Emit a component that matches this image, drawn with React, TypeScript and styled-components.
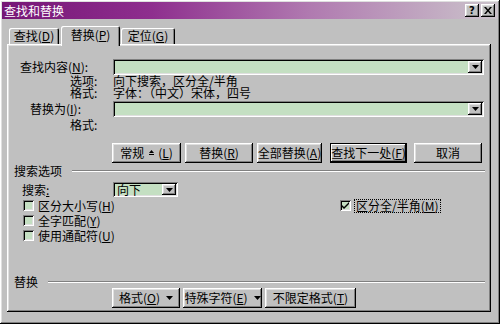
import styled, { createGlobalStyle, css } from 'styled-components';

const GlobalStyle = createGlobalStyle`
  html, body {
    margin: 0;
    padding: 0;
    background: #c0c0c0;
  }
  body {
    font-family: "Noto Sans CJK SC", "DejaVu Sans", sans-serif;
    font-size: 12px;
    color: #000;
  }
`;

const raised = css`
  box-shadow:
    inset -1px -1px #000,
    inset 1px 1px #fff,
    inset -2px -2px #808080,
    inset 2px 2px #dfdfdf;
`;

const sunken = css`
  box-shadow:
    inset 1px 1px #808080,
    inset -1px -1px #fff,
    inset 2px 2px #000,
    inset -2px -2px #dfdfdf;
`;

const GREEN = '#c4dfc2';

const Window = styled.div`
  width: 500px;
  height: 324px;
  box-sizing: border-box;
  padding: 2px;
  background: #c0c0c0;
  display: flex;
  flex-direction: column;
  ${raised}
`;

const TitleBar = styled.div`
  height: 17px;
  display: flex;
  align-items: center;
  padding: 0 3px 0 2px;
  background: linear-gradient(to right, #761676 0%, #8e2e8e 30%, #b07ab0 62%, #cbc3cb 100%);
  color: #fff;
`;

const Title = styled.span`
  flex: 1;
  line-height: 17px;
  font-size: 12px;
`;

const TitleButton = styled.div`
  width: 14px;
  height: 13px;
  margin-left: 2px;
  background: #c0c0c0;
  color: #000;
  display: flex;
  align-items: center;
  justify-content: center;
  font-family: "DejaVu Sans", sans-serif;
  font-weight: bold;
  font-size: 10px;
  line-height: 1;
  ${raised}
`;

const Body = styled.div`
  flex: 1;
  display: flex;
  flex-direction: column;
  padding: 7px 7px 0 5px;
`;

const TabRow = styled.div`
  height: 20px;
  margin-bottom: -2px;
  padding-left: 2px;
  display: flex;
  align-items: flex-start;
  position: relative;
  z-index: 1;
`;

const Tab = styled.div<{ $w: number; $active?: boolean; $ml?: number }>`
  width: ${(p) => p.$w}px;
  height: ${(p) => (p.$active ? 20 : 16)}px;
  margin-top: ${(p) => (p.$active ? 0 : 2)}px;
  margin-left: ${(p) => p.$ml ?? 0}px;
  box-sizing: border-box;
  background: #c0c0c0;
  border-radius: 2px 2px 0 0;
  text-align: center;
  padding-top: ${(p) => (p.$active ? 3 : 2)}px;
  line-height: 12px;
  white-space: nowrap;
  box-shadow:
    inset 1px 1px #fff,
    inset -1px 0 #000,
    inset -2px 0 #808080;
`;

const Key = styled.u`
  text-underline-offset: 1px;
`;

const Panel = styled.div`
  height: 268px;
  box-sizing: border-box;
  display: flex;
  flex-direction: column;
  padding: 15px 6px 4px 0;
  ${raised}
`;

const FieldRow = styled.div<{ $mt?: number }>`
  display: grid;
  grid-template-columns: 106px 371px;
  align-items: center;
  margin-top: ${(p) => p.$mt ?? 0}px;
  line-height: 12px;
`;

const Label = styled.div<{ $indent: number }>`
  padding-left: ${(p) => p.$indent}px;
  white-space: nowrap;
`;

const Combo = styled.div<{ $w?: number; $h?: number }>`
  width: ${(p) => (p.$w ? `${p.$w}px` : 'auto')};
  height: ${(p) => p.$h ?? 16}px;
  box-sizing: border-box;
  background: ${GREEN};
  display: flex;
  align-items: center;
  justify-content: space-between;
  padding: 2px 2px 2px 4px;
  ${sunken}
`;

const ComboText = styled.span`
  line-height: 12px;
`;

const DropButton = styled.div`
  width: 14px;
  height: 100%;
  box-sizing: border-box;
  background: #c0c0c0;
  display: flex;
  align-items: center;
  justify-content: center;
  ${raised}
`;

const Arrow = () => (
  <svg width="7" height="4" viewBox="0 0 7 4">
    <path d="M0 0h7L3.5 4z" fill="#000" />
  </svg>
);

const ButtonRow = styled.div<{ $mt: number }>`
  display: flex;
  padding-left: 105px;
  gap: 3px;
  margin-top: ${(p) => p.$mt}px;
`;

const Button = styled.div<{ $w: number; $ml?: number; $default?: boolean }>`
  width: ${(p) => p.$w}px;
  height: 20px;
  margin-left: ${(p) => p.$ml ?? 0}px;
  box-sizing: border-box;
  display: flex;
  align-items: center;
  justify-content: center;
  line-height: 12px;
  white-space: nowrap;
  background: #c0c0c0;
  ${(p) =>
    p.$default
      ? css`
          box-shadow:
            inset 0 0 0 1px #000,
            inset -2px -2px #000,
            inset 2px 2px #fff,
            inset -3px -3px #808080;
        `
      : raised}
`;

const ButtonIcon = styled.span<{ $side: 'left' | 'right' }>`
  display: inline-flex;
  align-items: center;
  margin: ${(p) => (p.$side === 'left' ? '0 4px 0 5px' : '0 0 0 6px')};
`;

const GroupHeader = styled.div<{ $mt?: string }>`
  display: flex;
  align-items: center;
  gap: 10px;
  padding-left: 7px;
  height: 12px;
  line-height: 12px;
  margin-top: ${(p) => p.$mt ?? '0'};

  &::after {
    content: '';
    flex: 1;
    height: 0;
    border-top: 1px solid #808080;
    border-bottom: 1px solid #fff;
  }
`;

const SearchRow = styled.div`
  display: grid;
  grid-template-columns: 106px 65px;
  align-items: center;
  margin-top: 5px;
  line-height: 12px;
`;

const OptionGrid = styled.div`
  display: grid;
  grid-template-columns: 317px auto;
  grid-auto-rows: 15px;
  padding-left: 16px;
  margin-top: 1px;
`;

const Check = styled.div`
  display: flex;
  align-items: center;
  gap: 4px;
  line-height: 12px;
`;

const Box = styled.div`
  width: 11px;
  height: 11px;
  box-sizing: border-box;
  background: ${GREEN};
  display: flex;
  align-items: center;
  justify-content: center;
  ${sunken}
`;

const Focus = styled.span`
  outline: 1px dotted #000;
  outline-offset: 0;
  padding: 0 1px;
`;

const CheckBox = ({ checked, children, focused }: { checked?: boolean; children: React.ReactNode; focused?: boolean }) => (
  <Check>
    <Box>
      {checked && (
        <svg width="7" height="7" viewBox="0 0 7 7">
          <path d="M0 3l2 2 5-5v2L2 7 0 5z" fill="#000" />
        </svg>
      )}
    </Box>
    {focused ? <Focus>{children}</Focus> : <span>{children}</span>}
  </Check>
);

const Spacer = styled.div`
  flex: 1;
`;

const CollapseIcon = () => (
  <svg width="5" height="6" viewBox="0 0 5 6">
    <path d="M2.5 0L5 3H0z" fill="#000" />
    <rect x="0" y="4" width="5" height="1" fill="#000" />
  </svg>
);

const CloseIcon = () => (
  <svg width="8" height="7" viewBox="0 0 8 7">
    <path d="M0 0h2l2 2.5L6 0h2L5 3.5 8 7H6L4 4.5 2 7H0l3-3.5z" fill="#000" />
  </svg>
);

export default function App() {
  return (
    <>
      <GlobalStyle />
      <Window>
        <TitleBar>
          <Title>查找和替换</Title>
          <TitleButton>?</TitleButton>
          <TitleButton>
            <CloseIcon />
          </TitleButton>
        </TitleBar>
        <Body>
          <TabRow>
            <Tab $w={50}>
              查找(<Key>D</Key>)
            </Tab>
            <Tab $w={59} $ml={2} $active>
              替换(<Key>P</Key>)
            </Tab>
            <Tab $w={54} $ml={1}>
              定位(<Key>G</Key>)
            </Tab>
          </TabRow>
          <Panel>
            <FieldRow>
              <Label $indent={13}>
                查找内容(<Key>N</Key>):
              </Label>
              <Combo>
                <ComboText />
                <DropButton>
                  <Arrow />
                </DropButton>
              </Combo>
            </FieldRow>
            <FieldRow>
              <Label $indent={63}>选项:</Label>
              <span>向下搜索，区分全/半角</span>
            </FieldRow>
            <FieldRow>
              <Label $indent={63}>格式:</Label>
              <span>字体：（中文）宋体，四号</span>
            </FieldRow>
            <FieldRow $mt={2}>
              <Label $indent={23}>
                替换为(<Key>I</Key>):
              </Label>
              <Combo>
                <ComboText />
                <DropButton>
                  <Arrow />
                </DropButton>
              </Combo>
            </FieldRow>
            <FieldRow $mt={2}>
              <Label $indent={63}>格式:</Label>
              <span />
            </FieldRow>
            <ButtonRow $mt={12}>
              <Button $w={69}>
                <span>常规</span>
                <ButtonIcon $side="left">
                  <CollapseIcon />
                </ButtonIcon>
                <span>
                  (<Key>L</Key>)
                </span>
              </Button>
              <Button $w={68} $ml={1}>
                <span>
                  替换(<Key>R</Key>)
                </span>
              </Button>
              <Button $w={65} $ml={1}>
                <span>
                  全部替换(<Key>A</Key>)
                </span>
              </Button>
              <Button $w={77} $ml={5} $default>
                <span>
                  查找下一处(<Key>F</Key>)
                </span>
              </Button>
              <Button $w={68} $ml={4}>
                <span>取消</span>
              </Button>
            </ButtonRow>
            <GroupHeader $mt="2px">搜索选项</GroupHeader>
            <SearchRow>
              <Label $indent={15}>
                搜索<Key>:</Key>
              </Label>
              <Combo $w={65} $h={15}>
                <ComboText>向下</ComboText>
                <DropButton>
                  <Arrow />
                </DropButton>
              </Combo>
            </SearchRow>
            <OptionGrid>
              <CheckBox>
                区分大小写(<Key>H</Key>)
              </CheckBox>
              <CheckBox checked focused>
                区分全/半角(<Key>M</Key>)
              </CheckBox>
              <CheckBox>
                全字匹配(<Key>Y</Key>)
              </CheckBox>
              <span />
              <CheckBox>
                使用通配符(<Key>U</Key>)
              </CheckBox>
            </OptionGrid>
            <Spacer />
            <GroupHeader>替换</GroupHeader>
            <ButtonRow $mt={0}>
              <Button $w={68}>
                <span>
                  格式(<Key>O</Key>)
                </span>
                <ButtonIcon $side="right">
                  <Arrow />
                </ButtonIcon>
              </Button>
              <Button $w={79}>
                <span>
                  特殊字符(<Key>E</Key>)
                </span>
                <ButtonIcon $side="right">
                  <Arrow />
                </ButtonIcon>
              </Button>
              <Button $w={91}>
                <span>
                  不限定格式(<Key>T</Key>)
                </span>
              </Button>
            </ButtonRow>
          </Panel>
        </Body>
      </Window>
    </>
  );
}
